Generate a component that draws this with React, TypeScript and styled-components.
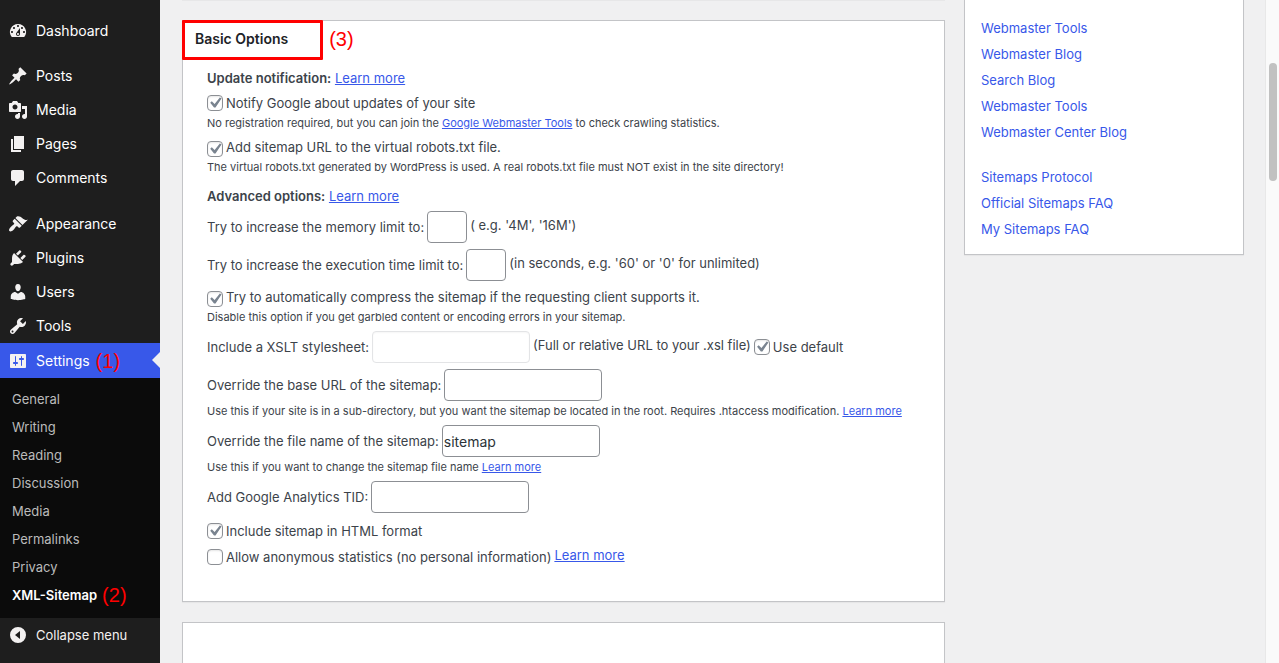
import React from "react";
import styled, { createGlobalStyle } from "styled-components";

const color = {
  page: "#f0f0f1",
  menu: "#1e1e1e",
  submenu: "#0b0b0b",
  accent: "#3858e9",
  text: "#3c434a",
  heading: "#1d2327",
  line: "#c3c4c7",
  field: "#8c8f94",
  mark: "#ff0000",
};

const GlobalStyle = createGlobalStyle`
  *, *::before, *::after { box-sizing: border-box; }
  body {
    margin: 0;
    overflow: hidden;
    background: ${color.page};
    color: ${color.text};
    font-family: Inter, "Liberation Sans", sans-serif;
    font-size: 13px;
    line-height: 20px;
  }
`;

const Page = styled.div`
  display: flex;
  height: 100vh;
`;

/* ---------- admin menu ---------- */

const Sidebar = styled.nav`
  flex: 0 0 160px;
  padding-top: 14px;
  background: ${color.menu};
`;

const MenuList = styled.ul`
  margin: 0 0 12px;
  padding: 0;
  list-style: none;
  &:first-of-type { margin-bottom: 11px; }
  &:last-of-type { margin-bottom: 0; }
`;

const MenuLink = styled.a<{ $current?: boolean }>`
  position: relative;
  display: flex;
  align-items: center;
  gap: 6px;
  height: ${(p) => (p.$current ? 35 : 34)}px;
  padding-left: 8px;
  color: #fff;
  background: ${(p) => (p.$current ? color.accent : "transparent")};
  font-size: 14px;
  text-decoration: none;
  ${(p) =>
    p.$current &&
    `&::after {
      content: "";
      position: absolute;
      right: 0;
      top: 9px;
      border: 8px solid transparent;
      border-left-width: 0;
      border-right-color: ${color.page};
    }`}
`;

const MenuIcon = styled.svg`
  flex: none;
  width: 20px;
  height: 20px;
  margin-right: 2px;
  fill: #f3f1f1;
`;

const Submenu = styled.ul`
  margin: 0;
  padding: 7px 0 9px;
  list-style: none;
  background: ${color.submenu};
`;

const SubLink = styled.a<{ $current?: boolean }>`
  display: flex;
  align-items: center;
  gap: 5px;
  height: 28px;
  padding-left: 12px;
  color: ${(p) => (p.$current ? "#fff" : "#bbbbbb")};
  font-weight: ${(p) => (p.$current ? 600 : 400)};
  text-decoration: none;
`;

const CollapseButton = styled.button`
  display: flex;
  align-items: center;
  gap: 6px;
  width: 100%;
  height: 34px;
  padding: 0 0 0 8px;
  border: 0;
  background: none;
  color: #f3f1f1;
  font: inherit;
`;

const Mark = styled.span`
  color: ${color.mark};
  font-family: "Liberation Sans", Arial, sans-serif;
  font-size: 20px;
  font-weight: 400;
  line-height: 24px;
`;

/* ---------- content ---------- */

const Content = styled.main`
  flex: 1;
  display: flex;
  gap: 19px;
  min-width: 0;
  padding: 0 21px 0 22px;
`;

const Column = styled.div`
  flex: 1;
  display: flex;
  flex-direction: column;
  gap: 20px;
  min-width: 0;
  border-top: 1px solid #e7e7e8;
  padding-top: 19px;
`;

const Panel = styled.section`
  border: 1px solid ${color.line};
  background: #fff;
  box-shadow: 0 1px 1px rgba(0, 0, 0, 0.04);
`;

const OptionsPanel = styled(Panel)`
  padding: 0 24px 34px;
`;

const NextPanel = styled(Panel)`
  flex: 1;
  border-bottom: 0;
`;

const TitleBar = styled.header`
  position: relative;
  display: flex;
  align-items: center;
  gap: 41px;
  height: 36px;
  margin: 0 -12px 11px;
`;

const Title = styled.h2`
  margin: 0;
  color: ${color.heading};
  font-size: 14px;
  font-weight: 600;
  line-height: 20px;
`;

const TitleFrame = styled.span`
  position: absolute;
  top: -1px;
  left: -13px;
  width: 141px;
  height: 40px;
  border: 3px solid ${color.mark};
  border-radius: 1px;
`;

const GroupTitle = styled.p`
  margin: 0 0 5px;
`;

const Strong = styled.b`
  font-weight: 600;
`;

const Options = styled.ul`
  display: flex;
  flex-direction: column;
  gap: 6px;
  margin: 0;
  padding: 0;
  list-style: none;
  & + p { margin-top: 11px; }
  & + & { margin-top: 8px; }
`;

const Row = styled.div<{ $low?: boolean }>`
  display: flex;
  align-items: ${(p) => (p.$low ? "flex-end" : "center")};
  gap: 3px;
  white-space: nowrap;
`;

const Note = styled.span`
  padding-bottom: 4px;
  line-height: 16px;
`;

const Hint = styled.small`
  display: block;
  padding-top: 2px;
  font-size: 11px;
  line-height: 16px;
  white-space: nowrap;
`;

const Link = styled.a`
  color: ${color.accent};
`;

const TextField = styled.input<{ $short?: boolean }>`
  width: ${(p) => (p.$short ? 40 : 158)}px;
  height: 32px;
  padding: 0 1px;
  border: 1px solid ${color.field};
  border-radius: 4px;
  background: #fff;
  color: #2c3338;
  font-family: inherit;
  font-size: 14px;
  &:disabled {
    border-color: #e3e4e6;
    box-shadow: inset 0 1px 2px rgba(0, 0, 0, 0.04);
  }
`;

const Tick = styled.input`
  appearance: none;
  flex: none;
  width: 16px;
  height: 16px;
  margin: 0;
  border: 1px solid ${color.field};
  border-radius: 4px;
  background: #fff;
  box-shadow: inset 0 1px 2px rgba(0, 0, 0, 0.1);
  &:checked::before {
    content: "";
    display: block;
    width: 20px;
    height: 20px;
    margin: -3px;
    background: #7a8490;
    clip-path: path("M14.83 4.5l1.7 1.1-6 9H9.02L5.2 9.7l1.6-1.4 2.8 2.6z");
  }
`;

/* ---------- link box ---------- */

const LinkBox = styled.aside`
  flex: 0 0 280px;
  align-self: flex-start;
  display: flex;
  flex-direction: column;
  gap: 25px;
  padding: 18px 16px 15px;
  border: 1px solid ${color.line};
  border-top: 0;
  background: #fff;
  box-shadow: 0 1px 1px rgba(0, 0, 0, 0.04);
`;

const LinkList = styled.ul`
  display: flex;
  flex-direction: column;
  gap: 6px;
  margin: 0;
  padding: 0;
  list-style: none;
`;

const PlainLink = styled(Link)`
  text-decoration: none;
`;

const ScrollTrack = styled.div`
  flex: 0 0 14px;
  padding: 63px 2px 0 3px;
  border-left: 1px solid #e8e8e8;
  background: #fafafa;
`;

const ScrollThumb = styled.div`
  height: 118px;
  border-radius: 4px;
  background: #c1c1c1;
`;

/* ---------- data ---------- */

const icons: Record<string, string> = {
  Dashboard:
    "M3.76 16h12.48A7.998 7.998 0 0 0 10 3a7.998 7.998 0 0 0-6.24 13zM10 4c.55 0 1 .45 1 1s-.45 1-1 1-1-.45-1-1 .45-1 1-1zM6 6c.55 0 1 .45 1 1s-.45 1-1 1-1-.45-1-1 .45-1 1-1zm8 0c.55 0 1 .45 1 1s-.45 1-1 1-1-.45-1-1 .45-1 1-1zm-5.37 5.55L12 7v6c0 1.1-.9 2-2 2s-2-.9-2-2c0-.57.24-1.08.63-1.45zM4 10c.55 0 1 .45 1 1s-.45 1-1 1-1-.45-1-1 .45-1 1-1zm12 0c.55 0 1 .45 1 1s-.45 1-1 1-1-.45-1-1 .45-1 1-1zm-5 3c0-.55-.45-1-1-1s-1 .45-1 1 .45 1 1 1 1-.45 1-1z",
  Posts:
    "M10.44 3.02l1.82-1.82 6.36 6.35-1.83 1.82c-1.05-.68-2.48-.57-3.41.36l-.75.75c-.92.93-1.04 2.35-.35 3.41l-1.83 1.82-2.41-2.41-2.8 2.79c-.42.42-3.38 2.71-3.8 2.29s1.86-3.39 2.28-3.81l2.79-2.79L4.1 9.36l1.83-1.82c1.05.69 2.48.57 3.4-.36l.75-.75c.93-.92 1.05-2.35.36-3.41z",
  Media:
    "M13 11V4c0-.55-.45-1-1-1h-1.67L9 1H5L3.67 3H2c-.55 0-1 .45-1 1v7c0 .55.45 1 1 1h10c.55 0 1-.45 1-1zM7 4.5c1.38 0 2.5 1.12 2.5 2.5S8.38 9.5 7 9.5 4.5 8.38 4.5 7 5.62 4.5 7 4.5zM14 6h5v10.5c0 1.38-1.12 2.5-2.5 2.5S14 17.88 14 16.5s1.12-2.5 2.5-2.5c.17 0 .34.02.5.05V9h-3V6zm-4 8.05V13h2v3.5c0 1.38-1.12 2.5-2.5 2.5S7 17.88 7 16.5 8.12 14 9.5 14c.17 0 .34.02.5.05z",
  Pages: "M6 15V2h10v13H6zm-1 1h8v2H3V5h2v11z",
  Comments:
    "M5 2h9c1.1 0 2 .9 2 2v7c0 1.1-.9 2-2 2h-2l-5 5v-5H5c-1.1 0-2-.9-2-2V4c0-1.1.9-2 2-2z",
  Appearance:
    "M14.48 11.06L7.41 3.99l1.5-1.5c.5-.56 2.3-.47 3.51.32 1.21.8 1.43 1.28 2.91 2.1 1.18.64 2.45 1.26 4.45.85zm-.71.71L6.7 4.7 4.93 6.47c-.39.39-.39 1.02 0 1.41l1.06 1.06c.39.39.39 1.03 0 1.42-.6.6-1.43 1.11-2.21 1.69-.35.26-.7.53-1.01.84C1.43 14.23.4 16.08 1.4 17.07c.99 1 2.84-.03 4.18-1.36.31-.31.58-.66.85-1.02.57-.78 1.08-1.61 1.69-2.21.39-.39 1.02-.39 1.41 0l1.06 1.06c.39.39 1.02.39 1.41 0z",
  Plugins:
    "M13.11 4.36L9.87 7.6 8 5.73l3.24-3.24c.35-.34 1.05-.2 1.56.32.52.51.66 1.21.31 1.55zm-8 1.77l.91-1.12 9.01 9.01-1.19.84c-.71.71-2.63 1.16-3.82 1.16H6.14L4.9 17.26c-.59.59-1.54.59-2.12 0-.59-.58-.59-1.53 0-2.12l1.24-1.24v-3.88c0-1.13.4-3.19 1.09-3.89zm7.26 3.97l3.24-3.24c.34-.35 1.04-.21 1.55.31.52.51.66 1.21.31 1.55l-3.24 3.25z",
  Users:
    "M10 9.25c-2.27 0-2.73-3.44-2.73-3.44C7 4.02 7.82 2 9.97 2c2.16 0 2.98 2.02 2.71 3.81 0 0-.41 3.44-2.68 3.44zm0 2.57L12.72 10c2.39 0 4.52 2.33 4.52 4.53v2.49s-3.65 1.13-7.24 1.13c-3.65 0-7.24-1.13-7.24-1.13v-2.49c0-2.25 1.94-4.48 4.47-4.48z",
  Tools:
    "M16.68 9.77c-1.34 1.34-3.3 1.67-4.95.99l-5.41 6.52c-.99.99-2.59.99-3.58 0s-.99-2.59 0-3.57l6.52-5.42c-.68-1.65-.35-3.61.99-4.95 1.28-1.28 3.12-1.62 4.72-1.06l-2.89 2.89 2.82 2.82 2.86-2.87c.53 1.58.18 3.39-1.08 4.65zM3.81 16.21c.4.39 1.04.39 1.43 0 .4-.4.4-1.04 0-1.43-.39-.4-1.03-.4-1.43 0-.39.39-.39 1.03 0 1.43z",
  Settings:
    "M18 16V4c0-.55-.45-1-1-1H3c-.55 0-1 .45-1 1v12c0 .55.45 1 1 1h14c.55 0 1-.45 1-1zM8 11h1c.55 0 1 .45 1 1s-.45 1-1 1H8v1.5c0 .28-.22.5-.5.5s-.5-.22-.5-.5V13H6c-.55 0-1-.45-1-1s.45-1 1-1h1V5.5c0-.28.22-.5.5-.5s.5.22.5.5V11zm5-2h-1c-.55 0-1-.45-1-1s.45-1 1-1h1V5.5c0-.28.22-.5.5-.5s.5.22.5.5V7h1c.55 0 1 .45 1 1s-.45 1-1 1h-1v5.5c0 .28-.22.5-.5.5s-.5-.22-.5-.5V9z",
  Collapse: "M10 2a8 8 0 1 0 0 16 8 8 0 0 0 0-16zM12 6v8l-5-4z",
};

const menuGroups = [
  ["Dashboard"],
  ["Posts", "Media", "Pages", "Comments"],
  ["Appearance", "Plugins", "Users", "Tools", "Settings"],
];

const settingsPages = [
  "General",
  "Writing",
  "Reading",
  "Discussion",
  "Media",
  "Permalinks",
  "Privacy",
  "XML-Sitemap",
];

const linkGroups = [
  ["Webmaster Tools", "Webmaster Blog", "Search Blog", "Webmaster Tools", "Webmaster Center Blog"],
  ["Sitemaps Protocol", "Official Sitemaps FAQ", "My Sitemaps FAQ"],
];

function Icon({ name }: { name: string }) {
  return (
    <MenuIcon viewBox="0 0 20 20" aria-hidden="true">
      <path fillRule="evenodd" d={icons[name]} />
    </MenuIcon>
  );
}

function CheckRow(props: {
  id: string;
  label: string;
  checked?: boolean;
  low?: boolean;
  children?: React.ReactNode;
}) {
  return (
    <Row $low={props.low}>
      <Tick type="checkbox" id={props.id} defaultChecked={props.checked} />
      <label htmlFor={props.id}>{props.label}</label>
      {props.children}
    </Row>
  );
}

function FieldRow(props: {
  id: string;
  label: string;
  short?: boolean;
  disabled?: boolean;
  value?: string;
  note?: string;
  children?: React.ReactNode;
}) {
  return (
    <Row>
      <label htmlFor={props.id}>{props.label}</label>
      <TextField
        type="text"
        id={props.id}
        $short={props.short}
        disabled={props.disabled}
        defaultValue={props.value}
      />
      {props.note && <Note>{props.note}</Note>}
      {props.children}
    </Row>
  );
}

export default function App() {
  return (
    <>
      <GlobalStyle />
      <Page>
        <Sidebar aria-label="Main menu">
          {menuGroups.map((group) => (
            <MenuList key={group[0]}>
              {group.map((name) => (
                <li key={name}>
                  <MenuLink href="#" $current={name === "Settings"}>
                    <Icon name={name} />
                    <span>{name}</span>
                    {name === "Settings" && <Mark>(1)</Mark>}
                  </MenuLink>
                  {name === "Settings" && (
                    <Submenu>
                      {settingsPages.map((page) => (
                        <li key={page}>
                          <SubLink href="#" $current={page === "XML-Sitemap"}>
                            <span>{page}</span>
                            {page === "XML-Sitemap" && <Mark>(2)</Mark>}
                          </SubLink>
                        </li>
                      ))}
                    </Submenu>
                  )}
                </li>
              ))}
            </MenuList>
          ))}
          <CollapseButton type="button">
            <Icon name="Collapse" />
            <span>Collapse menu</span>
          </CollapseButton>
        </Sidebar>

        <Content>
          <Column>
            <OptionsPanel>
              <TitleBar>
                <Title>Basic Options</Title>
                <Mark>(3)</Mark>
                <TitleFrame />
              </TitleBar>

              <GroupTitle>
                <Strong>Update notification:</Strong> <Link href="#">Learn more</Link>
              </GroupTitle>
              <Options>
                <li>
                  <CheckRow id="ping" label="Notify Google about updates of your site" checked />
                  <Hint>
                    No registration required, but you can join the{" "}
                    <Link href="#">Google Webmaster Tools</Link> to check crawling statistics.
                  </Hint>
                </li>
                <li>
                  <CheckRow
                    id="robots"
                    label="Add sitemap URL to the virtual robots.txt file."
                    checked
                    low
                  />
                  <Hint>
                    The virtual robots.txt generated by WordPress is used. A real robots.txt file
                    must NOT exist in the site directory!
                  </Hint>
                </li>
              </Options>

              <GroupTitle>
                <Strong>Advanced options:</Strong> <Link href="#">Learn more</Link>
              </GroupTitle>
              <Options>
                <li>
                  <FieldRow
                    id="memory"
                    label="Try to increase the memory limit to:"
                    short
                    note="( e.g. '4M', '16M')"
                  />
                </li>
                <li>
                  <FieldRow
                    id="time"
                    label="Try to increase the execution time limit to:"
                    short
                    note="(in seconds, e.g. '60' or '0' for unlimited)"
                  />
                </li>
                <li>
                  <CheckRow
                    id="compress"
                    label="Try to automatically compress the sitemap if the requesting client supports it."
                    checked
                    low
                  />
                  <Hint>
                    Disable this option if you get garbled content or encoding errors in your
                    sitemap.
                  </Hint>
                </li>
                <li>
                  <FieldRow
                    id="style"
                    label="Include a XSLT stylesheet:"
                    disabled
                    note="(Full or relative URL to your .xsl file)"
                  >
                    <CheckRow id="style-default" label="Use default" checked />
                  </FieldRow>
                </li>
                <li>
                  <FieldRow id="base-url" label="Override the base URL of the sitemap:" />
                  <Hint>
                    Use this if your site is in a sub-directory, but you want the sitemap be located
                    in the root. Requires .htaccess modification. <Link href="#">Learn more</Link>
                  </Hint>
                </li>
                <li>
                  <FieldRow
                    id="file-name"
                    label="Override the file name of the sitemap:"
                    value="sitemap"
                  />
                  <Hint>
                    Use this if you want to change the sitemap file name{" "}
                    <Link href="#">Learn more</Link>
                  </Hint>
                </li>
                <li>
                  <FieldRow id="tid" label="Add Google Analytics TID:" />
                </li>
              </Options>
              <Options>
                <li>
                  <CheckRow id="html" label="Include sitemap in HTML format" checked />
                </li>
                <li>
                  <CheckRow
                    id="stats"
                    label="Allow anonymous statistics (no personal information)"
                  >
                    <Note>
                      <Link href="#">Learn more</Link>
                    </Note>
                  </CheckRow>
                </li>
              </Options>
            </OptionsPanel>
            <NextPanel />
          </Column>

          <LinkBox>
            {linkGroups.map((group) => (
              <LinkList key={group[0]}>
                {group.map((text, i) => (
                  <li key={i}>
                    <PlainLink href="#">{text}</PlainLink>
                  </li>
                ))}
              </LinkList>
            ))}
          </LinkBox>
        </Content>

        <ScrollTrack aria-hidden="true">
          <ScrollThumb />
        </ScrollTrack>
      </Page>
    </>
  );
}
